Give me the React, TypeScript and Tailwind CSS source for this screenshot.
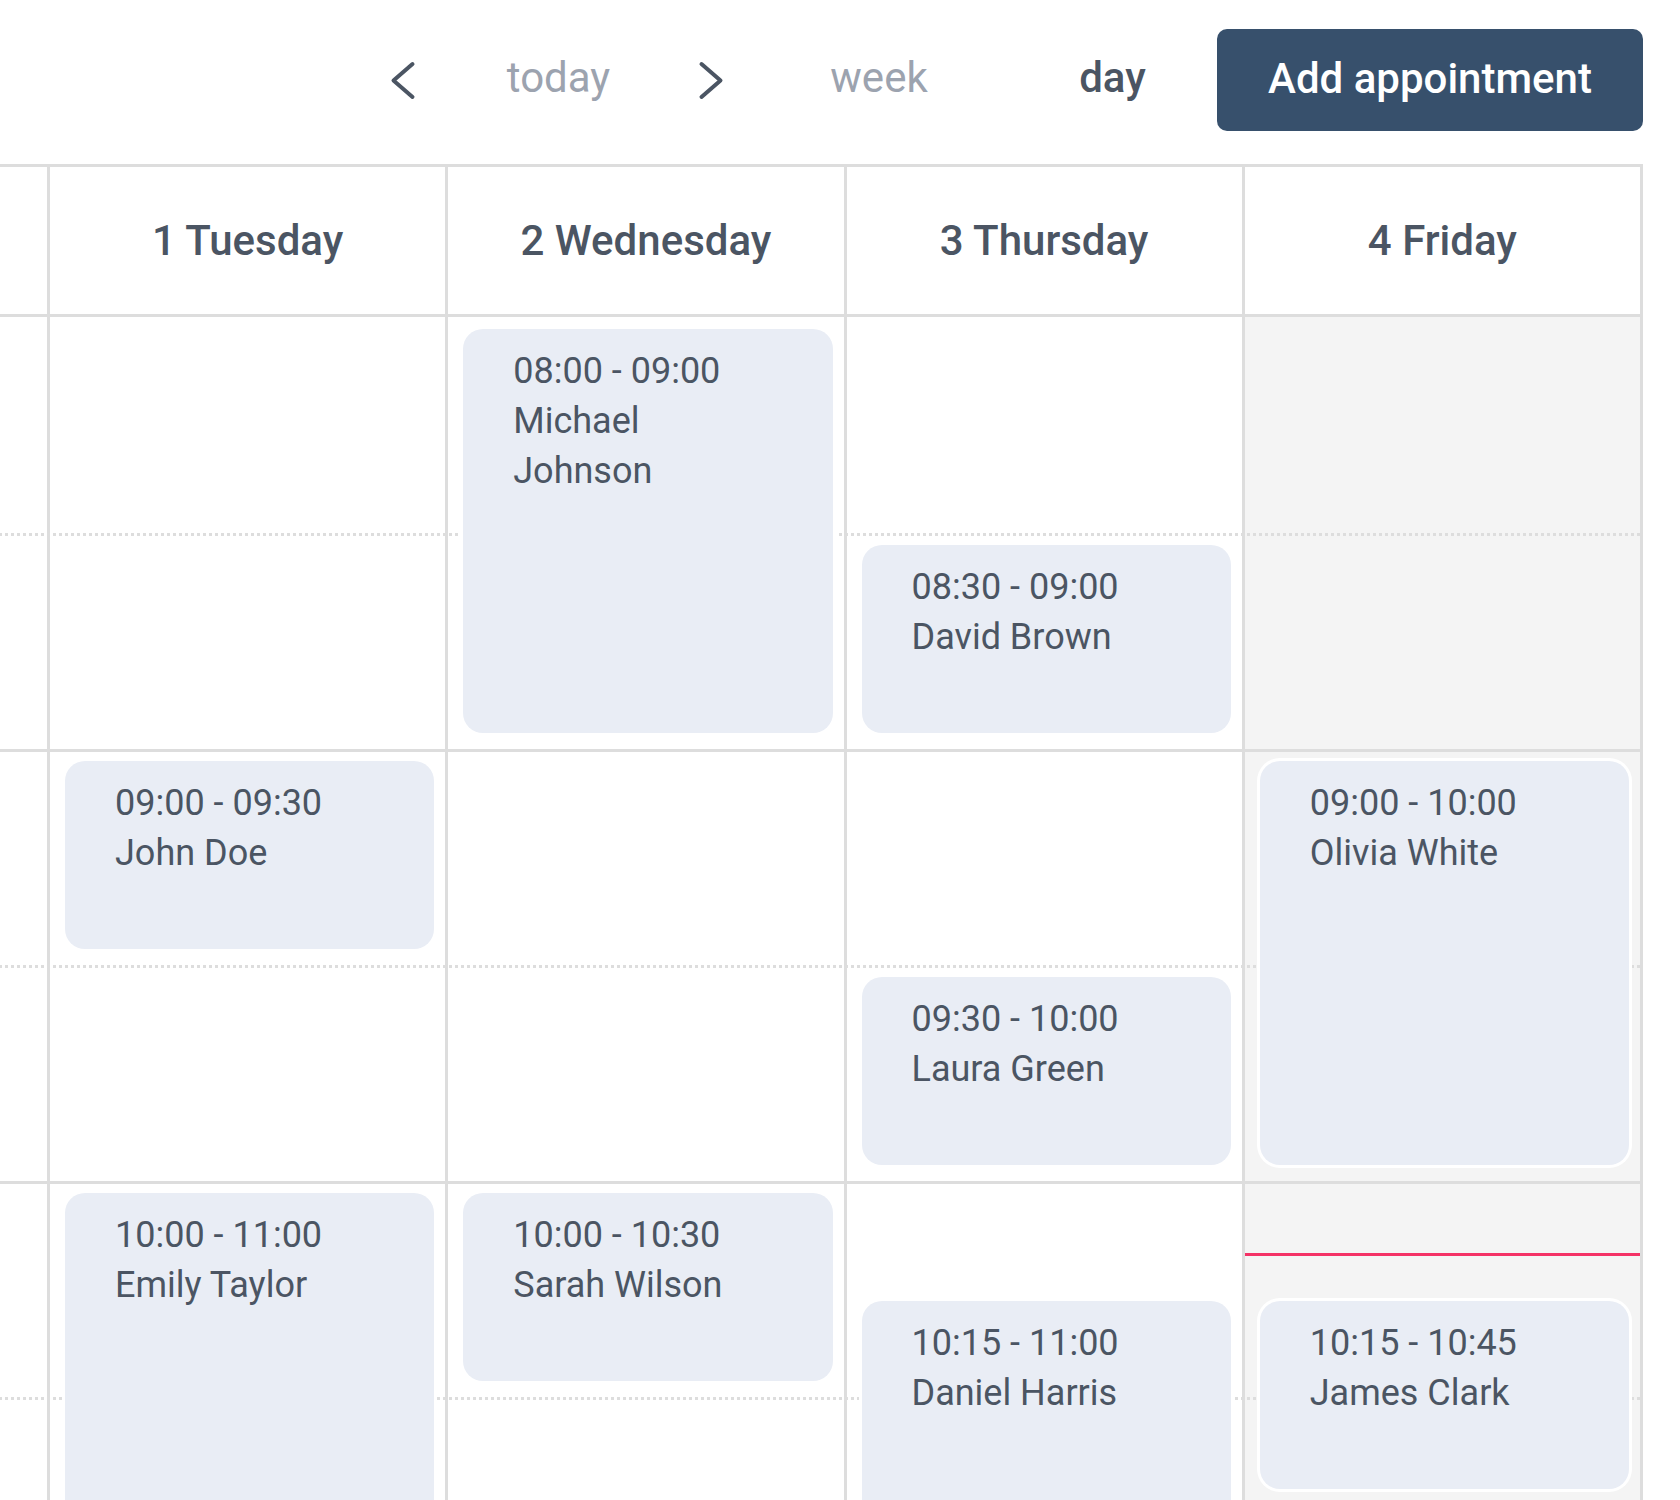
import React from 'react'

type Appt = { day: number; start: number; end: number; time: string; name: string }

const HOUR = 432

const days = ['1 Tuesday', '2 Wednesday', '3 Thursday', '4 Friday']

const appointments: Appt[] = [
  { day: 0, start: 9, end: 9.5, time: '09:00 - 09:30', name: 'John Doe' },
  { day: 0, start: 10, end: 11, time: '10:00 - 11:00', name: 'Emily Taylor' },
  { day: 1, start: 8, end: 9, time: '08:00 - 09:00', name: 'Michael Johnson' },
  { day: 1, start: 10, end: 10.5, time: '10:00 - 10:30', name: 'Sarah Wilson' },
  { day: 2, start: 8.5, end: 9, time: '08:30 - 09:00', name: 'David Brown' },
  { day: 2, start: 9.5, end: 10, time: '09:30 - 10:00', name: 'Laura Green' },
  { day: 2, start: 10.25, end: 11, time: '10:15 - 11:00', name: 'Daniel Harris' },
  { day: 3, start: 9, end: 10, time: '09:00 - 10:00', name: 'Olivia White' },
  { day: 3, start: 10.25, end: 10.75, time: '10:15 - 10:45', name: 'James Clark' },
]

const slots = [
  { h: 'h-[216px]', dotted: true },
  { h: 'h-[213px]', dotted: false },
  { h: 'h-[213px]', dotted: true },
  { h: 'h-[213px]', dotted: false },
  { h: 'h-[213px]', dotted: true },
  { h: 'h-[213px]', dotted: false },
]

function ChevronLeft() {
  return (
    <svg width="26" height="42" viewBox="0 0 26 42" fill="none">
      <polyline
        points="22.5,5 3.5,21.5 22.5,38"
        stroke="#4b5563"
        strokeWidth="4"
        strokeLinecap="round"
        strokeLinejoin="round"
      />
    </svg>
  )
}

function ChevronRight() {
  return (
    <svg width="26" height="42" viewBox="0 0 26 42" fill="none">
      <polyline
        points="3.5,5 22.5,21.5 3.5,38"
        stroke="#4b5563"
        strokeWidth="4"
        strokeLinecap="round"
        strokeLinejoin="round"
      />
    </svg>
  )
}

function Toolbar() {
  return (
    <div className="flex items-center pt-[29px] h-[131px]">
      <button className="ml-[362px] w-[81px] h-[102px] flex items-center justify-center">
        <ChevronLeft />
      </button>
      <button className="w-[231px] pb-[6px] text-center text-[42px] text-[#9ca3af]">today</button>
      <button className="w-[73px] h-[102px] flex items-center justify-center">
        <ChevronRight />
      </button>
      <button className="w-[264px] pb-[6px] text-center text-[42px] text-[#9ca3af]">week</button>
      <button className="w-[203px] pb-[6px] text-center text-[42px] font-medium text-[#4b5563]">day</button>
      <button className="ml-[3px] w-[426px] h-[102px] pb-[4px] rounded-[10px] bg-[#37506c] text-white text-[42px] font-medium">
        Add appointment
      </button>
    </div>
  )
}

function EventCard({ a }: { a: Appt }) {
  const top = 12 + (a.start - 8) * HOUR
  const height = (a.end - a.start) * HOUR - 28
  return (
    <div
      className="absolute left-[15px] right-[11px] rounded-[20px] bg-[#e9edf5] ring-3 ring-white pt-[17px] pl-[50px] pr-16 text-[36px] leading-[50px] text-[#4b5563] overflow-hidden"
      style={{ top, height }}
    >
      <div>{a.time}</div>
      <div>{a.name}</div>
    </div>
  )
}

export default function App() {
  return (
    <div className="w-[1680px] h-[1500px] overflow-hidden bg-white font-['Roboto',sans-serif]">
      <Toolbar />

      <div className="mt-[33px] w-[1643px] border-t-[3px] border-r-[3px] border-[#dddddd]">
        {/* header */}
        <div className="grid grid-cols-[47px_repeat(4,minmax(0,1fr))] border-b-[3px] border-[#dddddd]">
          <div className="h-[147px]" />
          {days.map((d) => (
            <div
              key={d}
              className="h-[147px] border-l-[3px] border-[#dddddd] flex items-center justify-center text-[42px] font-medium text-[#4b5563]"
            >
              {d}
            </div>
          ))}
        </div>

        {/* body */}
        <div className="grid">
          <div className="[grid-area:1/1] grid grid-cols-[47px_repeat(4,minmax(0,1fr))]">
            <div />
            <div />
            <div />
            <div />
            <div className="bg-[#f4f4f4]" />
          </div>

          <div className="[grid-area:1/1] flex flex-col">
            {slots.map((s, i) => (
              <div key={i} className="flex flex-col">
                <div className={s.h} />
                {s.dotted ? (
                  <div className="h-[3px] bg-[linear-gradient(to_right,#dddddd_50%,transparent_50%)] bg-[length:6px_3px] bg-[position:5px_0] bg-repeat-x" />
                ) : (
                  <div className="h-[3px] bg-[#dddddd]" />
                )}
              </div>
            ))}
          </div>

          <div className="[grid-area:1/1] grid grid-cols-[47px_repeat(4,minmax(0,1fr))]">
            <div />
            {days.map((d, i) => (
              <div key={d} className="relative border-l-[3px] border-[#dddddd]">
                {appointments
                  .filter((a) => a.day === i)
                  .map((a) => (
                    <EventCard key={a.name} a={a} />
                  ))}
                {i === 3 && <div className="absolute left-0 right-0 top-[936px] h-[3px] bg-[#f43266]" />}
              </div>
            ))}
          </div>
        </div>
      </div>
    </div>
  )
}
